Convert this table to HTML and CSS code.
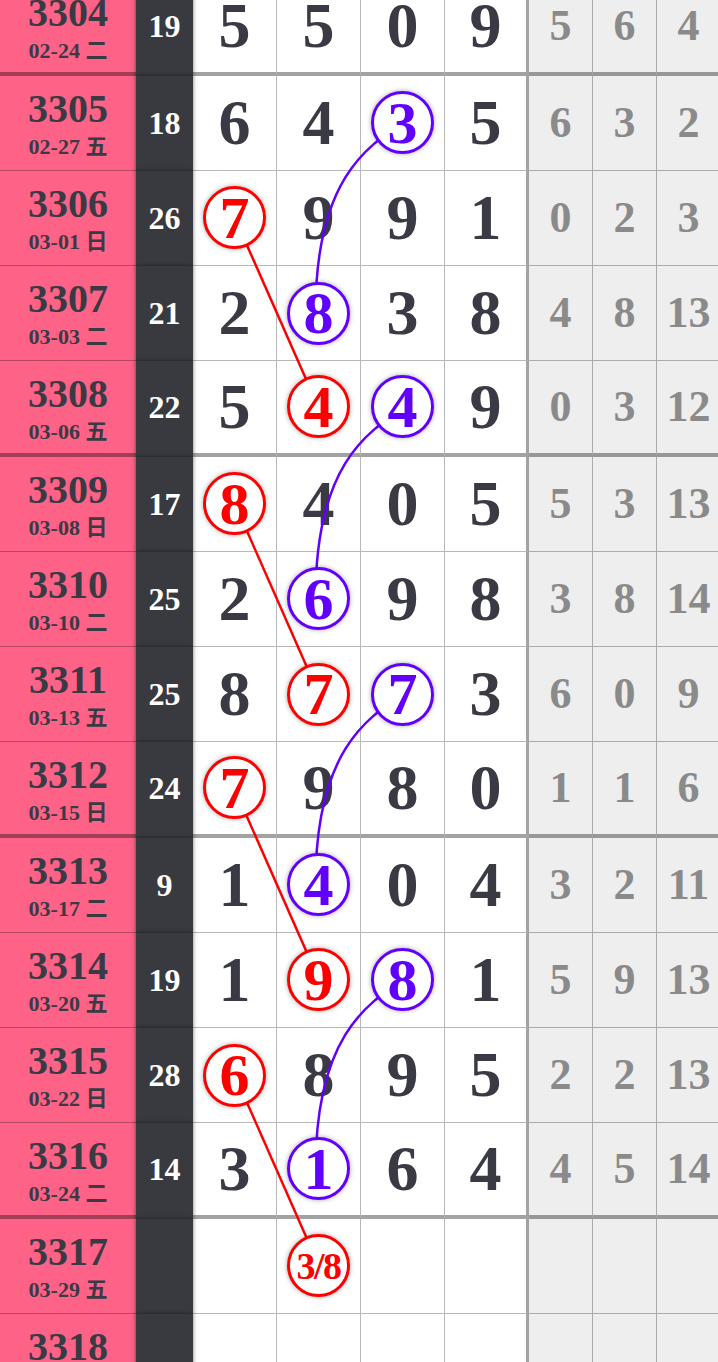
FILE: index.html
```html
<!DOCTYPE html>
<html lang="zh">
<head>
<meta charset="utf-8">
<title>走势图</title>
<link rel="stylesheet" href="styles.css">
</head>
<body>
<div class="board">
  <div class="row end">
    <div class="c-id"><span class="num">3304</span><span class="date">02-24 二</span></div>
    <div class="c-sum">19</div>
    <div class="c-d">5</div><div class="c-d">5</div><div class="c-d">0</div><div class="c-d last">9</div>
    <div class="c-g">5</div><div class="c-g">6</div><div class="c-g">4</div>
  </div>
  <div class="row">
    <div class="c-id"><span class="num">3305</span><span class="date">02-27 五</span></div>
    <div class="c-sum">18</div>
    <div class="c-d">6</div><div class="c-d">4</div><div class="c-d"><span class="ball blue">3</span></div><div class="c-d last">5</div>
    <div class="c-g">6</div><div class="c-g">3</div><div class="c-g">2</div>
  </div>
  <div class="row">
    <div class="c-id"><span class="num">3306</span><span class="date">03-01 日</span></div>
    <div class="c-sum">26</div>
    <div class="c-d"><span class="ball red">7</span></div><div class="c-d">9</div><div class="c-d">9</div><div class="c-d last">1</div>
    <div class="c-g">0</div><div class="c-g">2</div><div class="c-g">3</div>
  </div>
  <div class="row">
    <div class="c-id"><span class="num">3307</span><span class="date">03-03 二</span></div>
    <div class="c-sum">21</div>
    <div class="c-d">2</div><div class="c-d"><span class="ball blue">8</span></div><div class="c-d">3</div><div class="c-d last">8</div>
    <div class="c-g">4</div><div class="c-g">8</div><div class="c-g">13</div>
  </div>
  <div class="row end">
    <div class="c-id"><span class="num">3308</span><span class="date">03-06 五</span></div>
    <div class="c-sum">22</div>
    <div class="c-d">5</div><div class="c-d"><span class="ball red">4</span></div><div class="c-d"><span class="ball blue">4</span></div><div class="c-d last">9</div>
    <div class="c-g">0</div><div class="c-g">3</div><div class="c-g">12</div>
  </div>
  <div class="row">
    <div class="c-id"><span class="num">3309</span><span class="date">03-08 日</span></div>
    <div class="c-sum">17</div>
    <div class="c-d"><span class="ball red">8</span></div><div class="c-d">4</div><div class="c-d">0</div><div class="c-d last">5</div>
    <div class="c-g">5</div><div class="c-g">3</div><div class="c-g">13</div>
  </div>
  <div class="row">
    <div class="c-id"><span class="num">3310</span><span class="date">03-10 二</span></div>
    <div class="c-sum">25</div>
    <div class="c-d">2</div><div class="c-d"><span class="ball blue">6</span></div><div class="c-d">9</div><div class="c-d last">8</div>
    <div class="c-g">3</div><div class="c-g">8</div><div class="c-g">14</div>
  </div>
  <div class="row">
    <div class="c-id"><span class="num">3311</span><span class="date">03-13 五</span></div>
    <div class="c-sum">25</div>
    <div class="c-d">8</div><div class="c-d"><span class="ball red">7</span></div><div class="c-d"><span class="ball blue">7</span></div><div class="c-d last">3</div>
    <div class="c-g">6</div><div class="c-g">0</div><div class="c-g">9</div>
  </div>
  <div class="row end">
    <div class="c-id"><span class="num">3312</span><span class="date">03-15 日</span></div>
    <div class="c-sum">24</div>
    <div class="c-d"><span class="ball red">7</span></div><div class="c-d">9</div><div class="c-d">8</div><div class="c-d last">0</div>
    <div class="c-g">1</div><div class="c-g">1</div><div class="c-g">6</div>
  </div>
  <div class="row">
    <div class="c-id"><span class="num">3313</span><span class="date">03-17 二</span></div>
    <div class="c-sum">9</div>
    <div class="c-d">1</div><div class="c-d"><span class="ball blue">4</span></div><div class="c-d">0</div><div class="c-d last">4</div>
    <div class="c-g">3</div><div class="c-g">2</div><div class="c-g">11</div>
  </div>
  <div class="row">
    <div class="c-id"><span class="num">3314</span><span class="date">03-20 五</span></div>
    <div class="c-sum">19</div>
    <div class="c-d">1</div><div class="c-d"><span class="ball red">9</span></div><div class="c-d"><span class="ball blue">8</span></div><div class="c-d last">1</div>
    <div class="c-g">5</div><div class="c-g">9</div><div class="c-g">13</div>
  </div>
  <div class="row">
    <div class="c-id"><span class="num">3315</span><span class="date">03-22 日</span></div>
    <div class="c-sum">28</div>
    <div class="c-d"><span class="ball red">6</span></div><div class="c-d">8</div><div class="c-d">9</div><div class="c-d last">5</div>
    <div class="c-g">2</div><div class="c-g">2</div><div class="c-g">13</div>
  </div>
  <div class="row end">
    <div class="c-id"><span class="num">3316</span><span class="date">03-24 二</span></div>
    <div class="c-sum">14</div>
    <div class="c-d">3</div><div class="c-d"><span class="ball blue">1</span></div><div class="c-d">6</div><div class="c-d last">4</div>
    <div class="c-g">4</div><div class="c-g">5</div><div class="c-g">14</div>
  </div>
  <div class="row">
    <div class="c-id"><span class="num">3317</span><span class="date">03-29 五</span></div>
    <div class="c-sum"></div>
    <div class="c-d"></div><div class="c-d"><span class="ball red small">3/8</span></div><div class="c-d"></div><div class="c-d last"></div>
    <div class="c-g"></div><div class="c-g"></div><div class="c-g"></div>
  </div>
  <div class="row">
    <div class="c-id"><span class="num">3318</span><span class="date">04-01 日</span></div>
    <div class="c-sum"></div>
    <div class="c-d"></div><div class="c-d"></div><div class="c-d"></div><div class="c-d last"></div>
    <div class="c-g"></div><div class="c-g"></div><div class="c-g"></div>
  </div>

  <svg class="links" width="722" height="1429" viewBox="0 0 722 1429" aria-hidden="true">
    <g class="red-links" stroke="#ff0000" stroke-width="2.5" fill="none">
      <line x1="235" y1="238.1" x2="319" y2="428.6"/>
      <line x1="235" y1="523.9" x2="319" y2="714.4"/>
      <line x1="235" y1="809.6" x2="319" y2="1000.1"/>
      <line x1="235" y1="1095.4" x2="319" y2="1285.9"/>
    </g>
    <g class="blue-links" stroke="#6200ff" stroke-width="2.5" fill="none">
      <path d="M403 142.9 C366 166.9 315.5 200.9 315.5 333.4"/>
      <path d="M403 428.6 C366 452.6 315.5 486.6 315.5 619.1"/>
      <path d="M403 714.4 C366 738.4 315.5 772.4 315.5 904.9"/>
      <path d="M403 1000.1 C366 1024.1 315.5 1058.1 315.5 1190.6"/>
    </g>
  </svg>
</div>
</body>
</html>
```
FILE: styles.css
```css
* { box-sizing: border-box; }

html, body {
  margin: 0;
  padding: 0;
  width: 718px;
  height: 1362px;
  overflow: hidden;
  background: #ffffff;
}

body {
  font-family: "Liberation Serif", "Noto Sans CJK SC", serif;
  font-weight: 700;
  color: #3a3a45;
}

.board {
  position: relative;
  width: 721px;
  margin-top: -19.75px;
}

.row {
  display: grid;
  grid-template-columns: 136px 57px 84px 84px 84px 84px 64px 64px 64px;
  height: 95.25px;
}

.row > div {
  border-bottom: 1px solid rgba(0, 0, 0, 0.28);
}

.row.end > div {
  border-bottom: 4px solid rgba(0, 0, 0, 0.36);
}

.c-id {
  background: #fe6287;
  display: flex;
  flex-direction: column;
  align-items: center;
  padding-top: 11px;
}

.c-id .num {
  font-size: 40px;
  line-height: 44px;
  color: #3a3a45;
}

.c-id .date {
  font-size: 22px;
  line-height: 32px;
  color: #3a3a45;
  font-family: "Liberation Serif", "Noto Sans CJK SC", serif;
}

.row > .c-sum {
  position: relative;
  z-index: 1;
  background: #393940;
  color: #ffffff;
  font-size: 32px;
  line-height: 1;
  display: flex;
  align-items: center;
  justify-content: center;
  border-bottom-color: transparent;
  box-shadow: 0 0 4px rgba(0, 0, 0, 0.55);
}

.row.end > .c-sum {
  border-bottom-color: transparent;
}

.c-d {
  background: #ffffff;
  border-right: 1px solid rgba(0, 0, 0, 0.28);
  display: flex;
  align-items: center;
  justify-content: center;
  font-size: 64px;
  line-height: 1;
  color: #3a3a45;
}

.c-d.last {
  border-right: 3px solid rgba(0, 0, 0, 0.36);
}

.c-g {
  background: #eeeeee;
  border-right: 1px solid rgba(0, 0, 0, 0.28);
  display: flex;
  align-items: center;
  justify-content: center;
  font-size: 44px;
  line-height: 1;
  color: #8a8a8a;
}

.ball {
  position: relative;
  z-index: 3;
  width: 63px;
  height: 63px;
  flex: none;
  border-radius: 50%;
  border: 3px solid currentColor;
  background: #ffffff;
  box-shadow: 0 0 5px rgba(0, 0, 0, 0.35);
  display: flex;
  align-items: center;
  justify-content: center;
  font-size: 60px;
  line-height: 1;
}

.ball.red { color: #ff0000; }
.ball.blue { color: #6200ff; }

.ball.small {
  font-size: 38px;
  font-weight: 700;
  letter-spacing: -1.5px;
}

.links {
  position: absolute;
  left: 0;
  top: 0;
  z-index: 2;
  pointer-events: none;
}
```
